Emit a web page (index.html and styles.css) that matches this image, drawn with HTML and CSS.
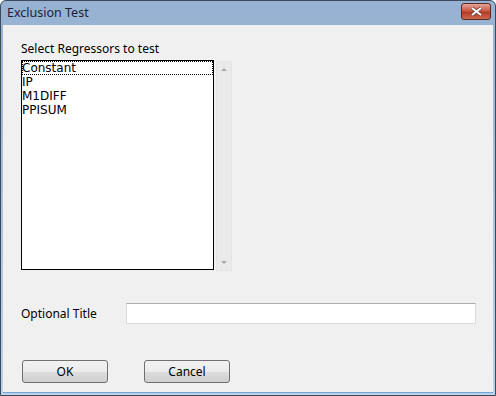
FILE: index.html
```html
<!DOCTYPE html>
<html lang="en">
<head>
    <meta charset="UTF-8">
    <title>Exclusion Test</title>
    <link rel="stylesheet" href="styles.css">
</head>
<body>
    <div class="window">
        <div class="title-bar">
            <span class="title">Exclusion Test</span>
            <button class="close-btn">
                <svg width="13" height="9" viewBox="0 0 13 9">
                    <path d="M2 1 L11 8 M11 1 L2 8" stroke="#5a3a3a" stroke-width="3.4"/>
                    <path d="M2 1 L11 8 M11 1 L2 8" stroke="#fff" stroke-width="2"/>
                </svg>
            </button>
        </div>
        <div class="client">
            <p class="label">Select Regressors to test</p>
            <div class="list-row">
                <ul class="listbox">
                    <li class="focused">Constant</li>
                    <li>IP</li>
                    <li>M1DIFF</li>
                    <li>PPISUM</li>
                </ul>
                <div class="scrollbar">
                    <span class="arrow up"></span>
                    <span class="arrow down"></span>
                </div>
            </div>
            <div class="title-row">
                <label class="label">Optional Title</label>
                <input type="text" class="title-input">
            </div>
            <div class="button-row">
                <button class="btn">OK</button>
                <button class="btn">Cancel</button>
            </div>
        </div>
    </div>
</body>
</html>
```

FILE: styles.css
```css
body {
    margin: 0;
    background-color: #fff;
    font-family: "Noto Sans", "Open Sans", sans-serif;
}

.window {
    width: 494px;
    height: 394px;
    border: 1px solid #3c4a5c;
    border-radius: 6px 6px 0 0;
    background: linear-gradient(#97b1d2, #bad2ea);
    display: flex;
    flex-direction: column;
}

.title-bar {
    height: 24px;
    display: flex;
    align-items: center;
    justify-content: space-between;
    padding: 0 4px 0 6px;
}

.title {
    font-size: 12.5px;
    color: #1a2233;
    margin-top: -2px;
}

.close-btn {
    width: 30px;
    height: 17px;
    margin-top: -3px;
    padding: 0;
    border: 1px solid #5b2a25;
    border-radius: 3px;
    background: linear-gradient(#e3a396, #cc5a44 45%, #b53a22 55%, #cc6a50);
    display: flex;
    align-items: center;
    justify-content: center;
}

.client {
    flex: 1;
    margin: 0 2px 2px 2px;
    background-color: #f0f0f0;
    border-bottom: 1px solid #6fa3d4;
    padding: 16px 0 0 18px;
    display: flex;
    flex-direction: column;
}

.label {
    margin: 0;
    font-size: 12px;
    line-height: 16px;
    color: #000;
}

.list-row {
    display: flex;
    margin-top: 3px;
}

.listbox {
    list-style: none;
    margin: 0;
    padding: 0;
    width: 191px;
    height: 208px;
    border: 1px solid #000;
    background-color: #fff;
}

.listbox li {
    font-family: "DejaVu Sans", sans-serif;
    font-size: 12px;
    line-height: 14px;
    height: 14px;
    color: #000;
}

.listbox li.focused {
    outline: 1px dotted #000;
    outline-offset: -1px;
}

.scrollbar {
    width: 14px;
    height: 208px;
    margin: 1px 0 0 2px;
    background-color: #eaeaea;
    border: 1px solid #e4e4e4;
    position: relative;
}

.arrow {
    position: absolute;
    left: 4px;
    width: 0;
    height: 0;
    border-left: 3px solid transparent;
    border-right: 3px solid transparent;
}

.arrow.up {
    top: 6px;
    border-bottom: 3px solid #a8a8a8;
}

.arrow.down {
    bottom: 6px;
    border-top: 3px solid #a8a8a8;
}

.title-row {
    display: flex;
    align-items: center;
    margin-top: 32px;
}

.title-row .label {
    width: 105px;
}

.title-input {
    width: 348px;
    height: 19px;
    padding: 0;
    border: 1px solid #dcdcdc;
    border-top-color: #abadb3;
    background-color: #fff;
}

.button-row {
    display: flex;
    gap: 36px;
    margin-top: 36px;
    padding-left: 1px;
}

.btn {
    width: 86px;
    height: 23px;
    padding: 0;
    font-family: "Noto Sans", "Open Sans", sans-serif;
    font-size: 12px;
    color: #000;
    border: 1px solid #707070;
    border-radius: 3px;
    background: linear-gradient(#f2f2f2, #ebebeb 50%, #dddddd 51%, #cfcfcf);
}
```
